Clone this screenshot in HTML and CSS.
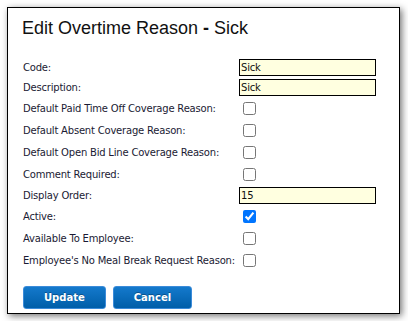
FILE: index.html
```html
<!DOCTYPE html>
<html lang="en">
<head>
    <meta charset="UTF-8">
    <meta name="viewport" content="width=device-width, initial-scale=1.0">
    <title>Edit Overtime Reason</title>
    <link rel="stylesheet" href="styles.css">
</head>
<body>

    <div class="dialog">
        <h1 class="dialog-title">Edit Overtime Reason <b>-</b> Sick</h1>

        <form class="reason-form">
            <label for="code">Code:</label>
            <div class="field field-text"><input type="text" id="code" value="Sick"></div>

            <label for="description">Description:</label>
            <div class="field field-text"><input type="text" id="description" value="Sick"></div>

            <label for="ptoDefault">Default Paid Time Off Coverage Reason:</label>
            <div class="field"><input type="checkbox" id="ptoDefault"></div>

            <label for="absentDefault">Default Absent Coverage Reason:</label>
            <div class="field"><input type="checkbox" id="absentDefault"></div>

            <label for="bidDefault">Default Open Bid Line Coverage Reason:</label>
            <div class="field"><input type="checkbox" id="bidDefault"></div>

            <label for="commentRequired">Comment Required:</label>
            <div class="field"><input type="checkbox" id="commentRequired"></div>

            <label for="displayOrder">Display Order:</label>
            <div class="field field-text"><input type="text" id="displayOrder" value="15"></div>

            <label for="active">Active:</label>
            <div class="field"><input type="checkbox" id="active" checked></div>

            <label for="availableToEmployee">Available To Employee:</label>
            <div class="field"><input type="checkbox" id="availableToEmployee"></div>

            <label for="noMealBreak">Employee's No Meal Break Request Reason:</label>
            <div class="field"><input type="checkbox" id="noMealBreak"></div>
        </form>

        <!-- Form actions -->
        <div class="actions">
            <button type="button" class="btn">Update</button>
            <button type="button" class="btn">Cancel</button>
        </div>
    </div>

</body>
</html>
```

FILE: styles.css
```css
body {
    margin: 0;
    padding: 7px;
    background-color: #fff;
    font-family: "DejaVu Sans", Verdana, sans-serif;
}

.dialog {
    width: 393px;
    height: 307px;
    box-sizing: border-box;
    border: 1px solid #000;
    background-color: #fff;
    box-shadow: 2px 2px 7px rgba(0, 0, 0, 0.55);
    padding: 10px 15px 0 15px;
}

.dialog-title {
    margin: 0 0 18px -1px;
    font-family: "Liberation Sans", Arial, sans-serif;
    font-size: 18px;
    font-weight: normal;
    line-height: 21px;
    color: #111;
}

.dialog-title b {
    font-weight: bold;
}

.reason-form {
    display: grid;
    grid-template-columns: 216px auto;
    font-size: 10px;
    letter-spacing: -0.2px;
    color: #1a1a33;
}

.reason-form label {
    display: flex;
    align-items: center;
    height: 22px;
}

.field {
    display: flex;
    align-items: center;
    height: 22px;
}

.reason-form label:has(+ .field-text),
.field-text {
    height: 20px;
}

.field input[type="checkbox"] {
    width: 13px;
    height: 13px;
    margin: 3px 3px 3px 4px;
}

.field input[type="text"] {
    width: 137px;
    height: 17px;
    box-sizing: border-box;
    margin: 0;
    padding: 0 1px;
    border: 1px solid #000;
    background-color: #ffffe0;
    font-family: "DejaVu Sans", Verdana, sans-serif;
    font-size: 10px;
    letter-spacing: -0.2px;
    color: #111;
    outline: none;
}

.actions {
    display: flex;
    gap: 7px;
    margin-top: 15px;
}

.btn {
    height: 23px;
    padding: 0 20px;
    border: 1px solid #3b8bd9;
    border-radius: 3px;
    background: linear-gradient(#1479cc, #005ea8);
    color: #fff;
    font-family: "DejaVu Sans", Verdana, sans-serif;
    font-size: 10px;
    font-weight: bold;
    text-shadow: 0 -1px 0 rgba(0, 0, 0, 0.3);
    cursor: pointer;
}
```
